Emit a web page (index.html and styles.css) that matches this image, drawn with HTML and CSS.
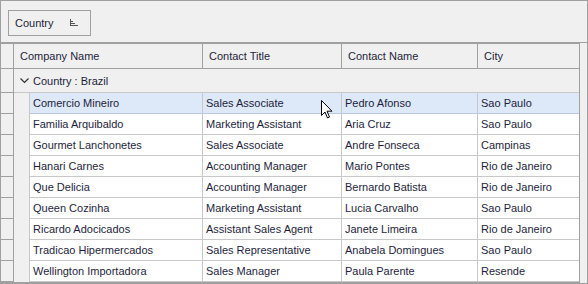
FILE: index.html
```html
<!DOCTYPE html>
<html>
<head>
<meta charset="utf-8">
<link rel="stylesheet" href="styles.css">
</head>
<body>
<div class="control">
  <div class="group-panel">
    <div class="group-chip">
      <span>Country</span>
      <svg class="sort-icon" width="8" height="7" viewBox="0 0 8 7">
        <rect x="0" y="0" width="1" height="7" fill="#555"/>
        <rect x="1" y="2" width="2" height="1" fill="#555"/>
        <rect x="1" y="4" width="4" height="1" fill="#555"/>
        <rect x="1" y="6" width="7" height="1" fill="#555"/>
      </svg>
    </div>
  </div>
  <div class="grid">
    <div class="row header">
      <div class="ind"></div>
      <div class="hc c1">Company Name</div>
      <div class="hc c2">Contact Title</div>
      <div class="hc c3">Contact Name</div>
      <div class="hc c4">City</div>
    </div>
    <div class="row grouprow">
      <div class="ind"></div>
      <div class="gcell">
        <svg class="chev" width="9" height="6" viewBox="0 0 9 6"><path d="M0.5 0.5 L4.5 4.5 L8.5 0.5" fill="none" stroke="#333" stroke-width="1.2"/></svg>
        <span>Country : Brazil</span>
      </div>
    </div>
    <div class="row data selected">
      <div class="ind"></div><div class="indent"></div>
      <div class="dc c1">Comercio Mineiro</div><div class="dc c2">Sales Associate</div><div class="dc c3">Pedro Afonso</div><div class="dc c4">Sao Paulo</div>
    </div>
    <div class="row data">
      <div class="ind"></div><div class="indent"></div>
      <div class="dc c1">Familia Arquibaldo</div><div class="dc c2">Marketing Assistant</div><div class="dc c3">Aria Cruz</div><div class="dc c4">Sao Paulo</div>
    </div>
    <div class="row data">
      <div class="ind"></div><div class="indent"></div>
      <div class="dc c1">Gourmet Lanchonetes</div><div class="dc c2">Sales Associate</div><div class="dc c3">Andre Fonseca</div><div class="dc c4">Campinas</div>
    </div>
    <div class="row data">
      <div class="ind"></div><div class="indent"></div>
      <div class="dc c1">Hanari Carnes</div><div class="dc c2">Accounting Manager</div><div class="dc c3">Mario Pontes</div><div class="dc c4">Rio de Janeiro</div>
    </div>
    <div class="row data">
      <div class="ind"></div><div class="indent"></div>
      <div class="dc c1">Que Delicia</div><div class="dc c2">Accounting Manager</div><div class="dc c3">Bernardo Batista</div><div class="dc c4">Rio de Janeiro</div>
    </div>
    <div class="row data">
      <div class="ind"></div><div class="indent"></div>
      <div class="dc c1">Queen Cozinha</div><div class="dc c2">Marketing Assistant</div><div class="dc c3">Lucia Carvalho</div><div class="dc c4">Sao Paulo</div>
    </div>
    <div class="row data">
      <div class="ind"></div><div class="indent"></div>
      <div class="dc c1">Ricardo Adocicados</div><div class="dc c2">Assistant Sales Agent</div><div class="dc c3">Janete Limeira</div><div class="dc c4">Rio de Janeiro</div>
    </div>
    <div class="row data">
      <div class="ind"></div><div class="indent"></div>
      <div class="dc c1">Tradicao Hipermercados</div><div class="dc c2">Sales Representative</div><div class="dc c3">Anabela Domingues</div><div class="dc c4">Sao Paulo</div>
    </div>
    <div class="row data">
      <div class="ind"></div><div class="indent"></div>
      <div class="dc c1">Wellington Importadora</div><div class="dc c2">Sales Manager</div><div class="dc c3">Paula Parente</div><div class="dc c4">Resende</div>
    </div>
  </div>
  <svg class="cursor" width="13" height="20" viewBox="0 0 13 20">
    <path d="M0.5 0.5 L0.5 15.5 L4 12 L6.5 18 L8.5 17 L6 11.2 L11 11.2 Z" fill="#fff" stroke="#000" stroke-width="1" stroke-linejoin="miter"/>
  </svg>
</div>
</body>
</html>
```
FILE: styles.css
```css
* { box-sizing: border-box; }
html, body { margin: 0; padding: 0; background: #f0f0f0; }
.control {
  position: relative;
  width: 588px;
  height: 284px;
  border: 1px solid #a0a0a0;
  background: #f0f0f0;
  font-family: "Liberation Sans", Arial, sans-serif;
  font-size: 11px;
  color: #1e1e3c;
  overflow: hidden;
}
.group-panel {
  height: 42px;
  padding: 9px 0 0 7px;
  border-bottom: 1px solid #a0a0a0;
}
.group-chip {
  display: flex;
  align-items: center;
  width: 83px;
  height: 26px;
  border: 1px solid #a0a0a0;
  padding-left: 6px;
  color: #1e1e3c;
}
.sort-icon { margin-left: 16px; margin-top: -1px; }
.grid {
  width: 579px;
  border-top: 1px solid #a0a0a0;
  border-right: 1px solid #a0a0a0;
  border-bottom: 1px solid #a0a0a0;
}
.row { display: flex; }
.ind {
  width: 13px;
  flex: none;
  border-right: 1px solid #a0a0a0;
  background: #f0f0f0;
}
.header { height: 25px; border-bottom: 1px solid #a0a0a0; }
.hc {
  display: flex;
  align-items: center;
  padding-left: 6px;
  border-right: 1px solid #a0a0a0;
  background: #f0f0f0;
}
.header .c1 { width: 189px; }
.c2 { width: 139px; }
.c3 { width: 136px; }
.c4 { width: 101px; border-right: none !important; }
.grouprow {
  height: 24px;
  border-bottom: 1px solid #c8c8c8;
}
.grouprow .ind { border-bottom: 1px solid #a0a0a0; margin-bottom: -1px; }
.gcell {
  flex: 1;
  display: flex;
  align-items: center;
  padding-left: 6px;
  background: #f0f0f0;
}
.chev { margin-right: 4px; margin-top: 1px; }
.data { height: 21px; }
.data .ind { border-bottom: 1px solid #a0a0a0; }
.indent {
  width: 16px;
  flex: none;
  background: #f0f0f0;
  border-right: 1px solid #c8c8c8;
}
.dc {
  display: flex;
  align-items: center;
  padding-left: 3px;
  background: #fff;
  border-right: 1px solid #c8c8c8;
  border-bottom: 1px solid #c8c8c8;
  white-space: nowrap;
  overflow: hidden;
}
.data .c1 { width: 173px; }
.selected .dc { background: #dde8f8; border-bottom-color: #b9c8e0; }
.cursor { position: absolute; left: 320px; top: 99px; }
```
